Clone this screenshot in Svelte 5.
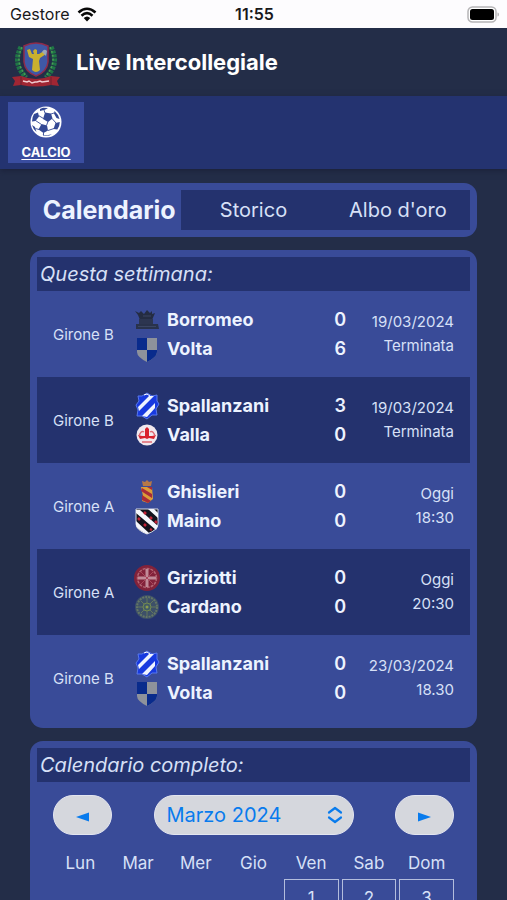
<script>
  const tabs = ['Calendario', 'Storico', "Albo d'oro"]
  const weekdays = ['Lun', 'Mar', 'Mer', 'Gio', 'Ven', 'Sab', 'Dom']
  const months = ['Febbraio 2024', 'Marzo 2024', 'Aprile 2024']

  const matches = [
    { group: 'Girone B', home: 'Borromeo', away: 'Volta', score: [0, 6], date: '19/03/2024', status: 'Terminata' },
    { group: 'Girone B', home: 'Spallanzani', away: 'Valla', score: [3, 0], date: '19/03/2024', status: 'Terminata' },
    { group: 'Girone A', home: 'Ghislieri', away: 'Maino', score: [0, 0], date: 'Oggi', status: '18:30' },
    { group: 'Girone A', home: 'Griziotti', away: 'Cardano', score: [0, 0], date: 'Oggi', status: '20:30' },
    { group: 'Girone B', home: 'Spallanzani', away: 'Volta', score: [0, 0], date: '23/03/2024', status: '18.30' }
  ]

  let activeTab = $state('Calendario')
  let monthIndex = $state(1)

  const weeks = $derived.by(() => {
    const month = monthIndex + 1
    const offset = (new Date(2024, month, 1).getDay() + 6) % 7
    const total = new Date(2024, month + 1, 0).getDate()
    const cells = Array(offset).fill(null)
    for (let d = 1; d <= total; d++) cells.push(d)
    while (cells.length % 7) cells.push(null)
    const rows = []
    for (let i = 0; i < cells.length; i += 7) rows.push(cells.slice(i, i + 7))
    return rows
  })

  function changeMonth(step) {
    monthIndex = Math.min(months.length - 1, Math.max(0, monthIndex + step))
  }
</script>

{#snippet crest(team)}
  <svg class="crest" viewBox="0 0 28 28" aria-hidden="true">
    {#if team === 'Borromeo'}
      <path d="M2 5l4 2 2-2 3 3 3-4 3 3 2-2v3l3-1-3 7H7L5 9z" fill="#242c42" />
      <path d="M6 13h14v5H6z" fill="#2c3550" />
      <path d="M3 18h22l1 5H3z" fill="#29324b" />
      <path d="M5 20.500h18M10 10h8" stroke="#3a4563" stroke-width="1" />
    {:else if team === 'Volta'}
      <path d="M4 3h20v14q0 5-10 10Q4 22 4 17z" fill="#8e929b" />
      <path d="M4 3h10v12H4zM14 15h10v2q0 5-10 10z" fill="#092b8c" />
    {:else if team === 'Spallanzani'}
      <path d="M5 4l4 0 5-3 5 3 5-1v6l2 3-3 5 1 6-5 0-5 4-5-3-5 0 1-6-2-5 3-4z" fill="#1739df" stroke="#5878ec" />
      <path d="M5 15L16 4l5 0L6 19zM9 24L22 11v5l-8 9z" fill="#eef3ff" />
      <path d="M11 3l3-1 3 2" stroke="#fff" fill="none" />
    {:else if team === 'Valla'}
      <circle cx="14" cy="14" r="10.500" fill="#f1e8ee" />
      <path d="M12 8l2-2 2 2v7h3l4-1-2 4-5-1-2 1-2-1-5 1-2-4 4 1h3z" fill="#d9232e" />
      <path d="M6 15q2-6 5-4M22 15q-2-6-5-4M9 21h10" fill="none" stroke="#df6670" stroke-width="1.500" />
    {:else if team === 'Ghislieri'}
      <path d="M9 3l3 1 2-2 2 2 3-1-1 5h-8z" fill="#b67847" />
      <path d="M8 9h11l1 12-5 4-6-2 1-5z" fill="#dc9d38" />
      <path d="M9 10l10 6v4L8 13zM9 17l9 6-3 2-6-3zM14 9h5v3z" fill="#a82b39" />
    {:else if team === 'Maino'}
      <path d="M3 2h22v15q0 6-11 10Q3 23 3 17z" fill="#12131d" stroke="#d5d9e5" />
      <path d="M3 3h4l18 16-2 4L3 6zM15 2h6l4 4v5zM3 14l13 12-2 1Q3 22 3 18z" fill="#f5f6fb" />
      <path d="M11 5l2 2M17 10l2 2M22 14l2 2M5 11l2 2M11 17l2 2M17 22l2 1" stroke="#c32236" stroke-width="2.500" />
    {:else if team === 'Griziotti'}
      <circle cx="14" cy="14" r="13" fill="#82223a" />
      <circle cx="14" cy="14" r="9.500" fill="none" stroke="#b26473" stroke-width="1.500" stroke-dasharray="3 1" />
      <path d="M14 5v18M5 14h18" stroke="#c18b98" stroke-width="3" />
      <path d="M8 8l12 12M20 8L8 20" stroke="#a9455b" stroke-width="1" />
    {:else}
      <circle cx="14" cy="14" r="12" fill="#3d5068" />
      <circle cx="14" cy="14" r="10" fill="none" stroke="#647665" stroke-width="2" stroke-dasharray="2 1" />
      <path d="M14 5v18M5 14h18M8 8l12 12M20 8L8 20" stroke="#63775c" stroke-width="1" />
      <circle cx="14" cy="14" r="4" fill="#435c65" stroke="#738a50" />
      <circle cx="14" cy="14" r="1.500" fill="#8b9d4d" />
    {/if}
  </svg>
{/snippet}

<div class="app">
  <div class="status-bar">
    <div class="carrier">
      <span>Gestore</span>
      <svg width="20" height="15" viewBox="0 0 20 15" aria-label="Wi-Fi" role="img">
        <path d="M1.500 5.500q8.500-7.500 17 0M4.500 8.700q5.500-5 11 0" fill="none" stroke="#080808" stroke-width="2.600" />
        <path d="M6.700 11q3.300-3 6.600 0L10 14.500z" fill="#080808" />
      </svg>
    </div>
    <time>11:55</time>
    <svg class="battery" width="32" height="17" viewBox="0 0 32 17" aria-label="Batteria" role="img">
      <rect x="1" y="1" width="28" height="15" rx="4.500" fill="#fff" stroke="#b5b4b6" stroke-width="1.500" />
      <rect x="3" y="3" width="24" height="11" rx="2.500" fill="#000" />
      <path d="M30.500 6.500q1.500 0 1.500 2t-1.500 2z" fill="#b5b4b6" />
    </svg>
  </div>

  <header>
    <svg class="logo" width="48" height="48" viewBox="0 0 48 48" aria-hidden="true">
      <path d="M9 6Q0 23 14 36M39 6q9 17-5 30" fill="none" stroke="#1f7646" stroke-width="5" stroke-dasharray="3 1" />
      <path d="M10 6Q2 22 15 36M38 6q8 16-5 30" fill="none" stroke="#4b9b55" stroke-width="1.500" stroke-dasharray="2 2" />
      <path d="M12 5q12-6 24 0v16q-1 10-12 14Q13 31 12 21z" fill="#3f58a6" stroke="#8f2b49" stroke-width="1.500" />
      <path d="M15 9l3-1 2 5 2 0-1-3 2-2 2 1v4l2 0 5-3 2 3-6 4-1 3 1 9q-4 4-8 0l1-11-4-2z" fill="#c9b02f" />
      <path d="M30 11q2-4 5-1l-1 5" fill="#9aa8b9" />
      <path d="M0 36l9-1q15 6 30 0l9 1-3 4 2 5-8-1q-15 3-30 0l-8 1 2-5z" fill="#a02633" />
      <path d="M9 36v8M39 36v8" stroke="#6f2030" />
      <path d="M11 40l4 1 2-1 3 2 3-1 2 0 3-1 2 1 7-1" fill="none" stroke="#f0cbd0" stroke-width="1.500" />
    </svg>
    <h1>Live Intercollegiale</h1>
  </header>

  <nav>
    <a class="sport" href="#calcio">
      <svg width="32" height="32" viewBox="0 0 32 32" aria-hidden="true">
        <circle cx="16" cy="16" r="15.500" fill="#fff" />
        <g fill="#334894">
          <path d="M15 6.500l6 1 1.500 5-4.500 3.500-5-3z" />
          <path d="M11.500 18l5.500 1.500 1 5-4.500 2.500-5-3.500z" />
          <path d="M10 3l3-1.300 5 .2-3 1.900-5 1.200z" />
          <path d="M4 8l4-1.500 1 4L5.500 15 2 15.500Q2 11 4 8z" />
          <path d="M24.500 5q4 3.500 5 8l-3-1-2.500-4.500z" />
          <path d="M2 19l3 2 1.500 5Q3 23 2 19z" />
          <path d="M25.500 17l4.300-1q0 4-2.500 7.500l-3.800-.5z" />
          <path d="M12 28.700l5 .5 5-1q-5 3-10 .5z" />
        </g>
        <path d="M14 4l1 3M8.500 9.500l5 3M21 8l3-1M22 12.500l4 4.500M18 15.500l-1.500 4M5.500 14.500l6 4M9 23.500l-3.500-1M18 24.500l6-2M13.500 26.500v3" fill="none" stroke="#334894" stroke-width=".9" />
      </svg>
      <span>CALCIO</span>
    </a>
  </nav>

  <main>
    <div class="card tabs">
      {#each tabs as tab}
        <button class="tab" class:active={activeTab === tab} onclick={() => (activeTab = tab)}>{tab}</button>
      {/each}
    </div>

    <section class="card">
      <h2>Questa settimana:</h2>
      {#each matches as match}
        <div class="match">
          <span class="group">{match.group}</span>
          <div class="teams">
            <div class="team">
              {@render crest(match.home)}
              <span>{match.home}</span>
              <b>{match.score[0]}</b>
            </div>
            <div class="team">
              {@render crest(match.away)}
              <span>{match.away}</span>
              <b>{match.score[1]}</b>
            </div>
          </div>
          <div class="when">
            <span>{match.date}</span>
            <span>{match.status}</span>
          </div>
        </div>
      {/each}
    </section>

    <section class="card">
      <h2>Calendario completo:</h2>
      <div class="month-bar">
        <button class="pill" aria-label="Mese precedente" onclick={() => changeMonth(-1)}>
          <svg width="13" height="10" viewBox="0 0 13 10"><path d="M0 5l13-4.500v9z" fill="#087bed" /></svg>
        </button>
        <div class="month">
          <select class="pill" aria-label="Mese" bind:value={monthIndex}>
            {#each months as month, i}
              <option value={i}>{month}</option>
            {/each}
          </select>
          <svg width="16" height="18" viewBox="0 0 16 18" aria-hidden="true">
            <path d="M2 6.500l6-4.500 6 4.500M2 11.500l6 4.500 6-4.500" fill="none" stroke="#087bed" stroke-width="2.200" stroke-linecap="round" stroke-linejoin="round" />
          </svg>
        </div>
        <button class="pill" aria-label="Mese successivo" onclick={() => changeMonth(1)}>
          <svg width="13" height="10" viewBox="0 0 13 10"><path d="M13 5L0 .5v9z" fill="#087bed" /></svg>
        </button>
      </div>
      <table>
        <thead>
          <tr>
            {#each weekdays as day}
              <th>{day}</th>
            {/each}
          </tr>
        </thead>
        <tbody>
          {#each weeks as week}
            <tr>
              {#each week as day}
                <td class:day={day}>{day ?? ''}</td>
              {/each}
            </tr>
          {/each}
        </tbody>
      </table>
    </section>
  </main>
</div>

<style>
  :global(body) {
    background: #232d48;
  }

  .app {
    display: flex;
    flex-direction: column;
    height: 100vh;
    overflow: hidden;
    background: #232d48;
    color: #d7e0f7;
    font-family: Inter, "Liberation Sans", sans-serif;
  }

  .status-bar {
    display: grid;
    grid-template-columns: 1fr auto 1fr;
    align-items: center;
    flex: none;
    height: 28px;
    padding: 0 8px 0 10px;
    background: #fdfcfe;
    color: #19191b;
    font-size: 16px;
  }

  .carrier {
    display: flex;
    align-items: center;
    gap: 8px;
  }

  time {
    font-weight: 600;
  }

  .battery {
    justify-self: end;
  }

  header {
    display: flex;
    align-items: center;
    flex: none;
    gap: 16px;
    height: 68px;
    padding: 0 12px;
  }

  .logo {
    margin-top: 6px;
  }

  h1 {
    margin: 0;
    color: #fff;
    font-size: 22px;
    font-weight: 700;
  }

  nav {
    position: relative;
    flex: none;
    padding: 6px 8px;
    background: #243370;
    box-shadow: 0 2px 6px rgba(24, 26, 50, 0.6);
  }

  .sport {
    display: flex;
    flex-direction: column;
    align-items: center;
    gap: 6px;
    width: 76px;
    padding: 4px 0 3px;
    background: #3a4da0;
    color: #fff;
    font-size: 13px;
    font-weight: 700;
    line-height: 16px;
    text-underline-offset: 2px;
  }

  main {
    display: flex;
    flex-direction: column;
    flex: 1;
    gap: 13px;
    min-height: 0;
    padding: 14px 30px;
    overflow-y: auto;
    scrollbar-width: none;
  }

  .card {
    flex: none;
    padding: 7px;
    border-radius: 13px;
    background: #394b98;
  }

  .tabs {
    display: grid;
    grid-template-columns: repeat(3, minmax(0, 1fr));
  }

  .tab {
    height: 40px;
    padding: 0;
    border: 0;
    background: #24326e;
    color: #d7e0f7;
    font-family: inherit;
    font-size: 20px;
    cursor: pointer;
  }

  .tab.active {
    background: none;
    color: #edf3ff;
    font-size: 25px;
    font-weight: 700;
  }

  h2 {
    margin: 0;
    padding: 0 3px;
    background: #24326e;
    font-size: 20px;
    font-style: italic;
    font-weight: 400;
    line-height: 34px;
  }

  .match {
    display: grid;
    grid-template-columns: 64px minmax(0, 1fr) 92px;
    align-items: center;
    gap: 16px;
    height: 86px;
    padding: 0 16px;
  }

  .match:nth-of-type(even) {
    background: #24326e;
  }

  .group {
    font-size: 15px;
    white-space: nowrap;
  }

  .team {
    display: flex;
    align-items: center;
    gap: 6px;
    height: 29px;
    color: #edf3ff;
    font-size: 18px;
    font-weight: 700;
  }

  .team span {
    flex: 1;
  }

  .team b {
    font-weight: 600;
  }

  .crest {
    flex: none;
    width: 28px;
    height: 28px;
  }

  .when {
    display: flex;
    flex-direction: column;
    align-items: flex-end;
    font-size: 15px;
    line-height: 24px;
  }

  .month-bar {
    display: flex;
    align-items: center;
    justify-content: space-between;
    padding: 13px 16px 12px;
  }

  .pill {
    width: 59px;
    height: 40px;
    padding: 0;
    border: 1px solid #e3e5f0;
    border-radius: 20px;
    background: #d5d7dd;
    color: #087bed;
    font-family: inherit;
    font-size: 20px;
    cursor: pointer;
  }

  .month {
    position: relative;
    width: 200px;
  }

  .month select {
    width: 100%;
    padding: 0 12px;
    appearance: none;
  }

  .month svg {
    position: absolute;
    top: 11px;
    right: 11px;
    pointer-events: none;
  }

  table {
    width: calc(100% - 26px);
    margin: 0 13px;
    border-spacing: 3px;
    table-layout: fixed;
  }

  th,
  td {
    padding: 0;
    font-size: 17px;
    font-weight: 400;
    text-align: center;
  }

  th {
    height: 26px;
  }

  td {
    height: 36px;
  }

  .day {
    border: 1px solid #b3bddd;
  }
</style>
